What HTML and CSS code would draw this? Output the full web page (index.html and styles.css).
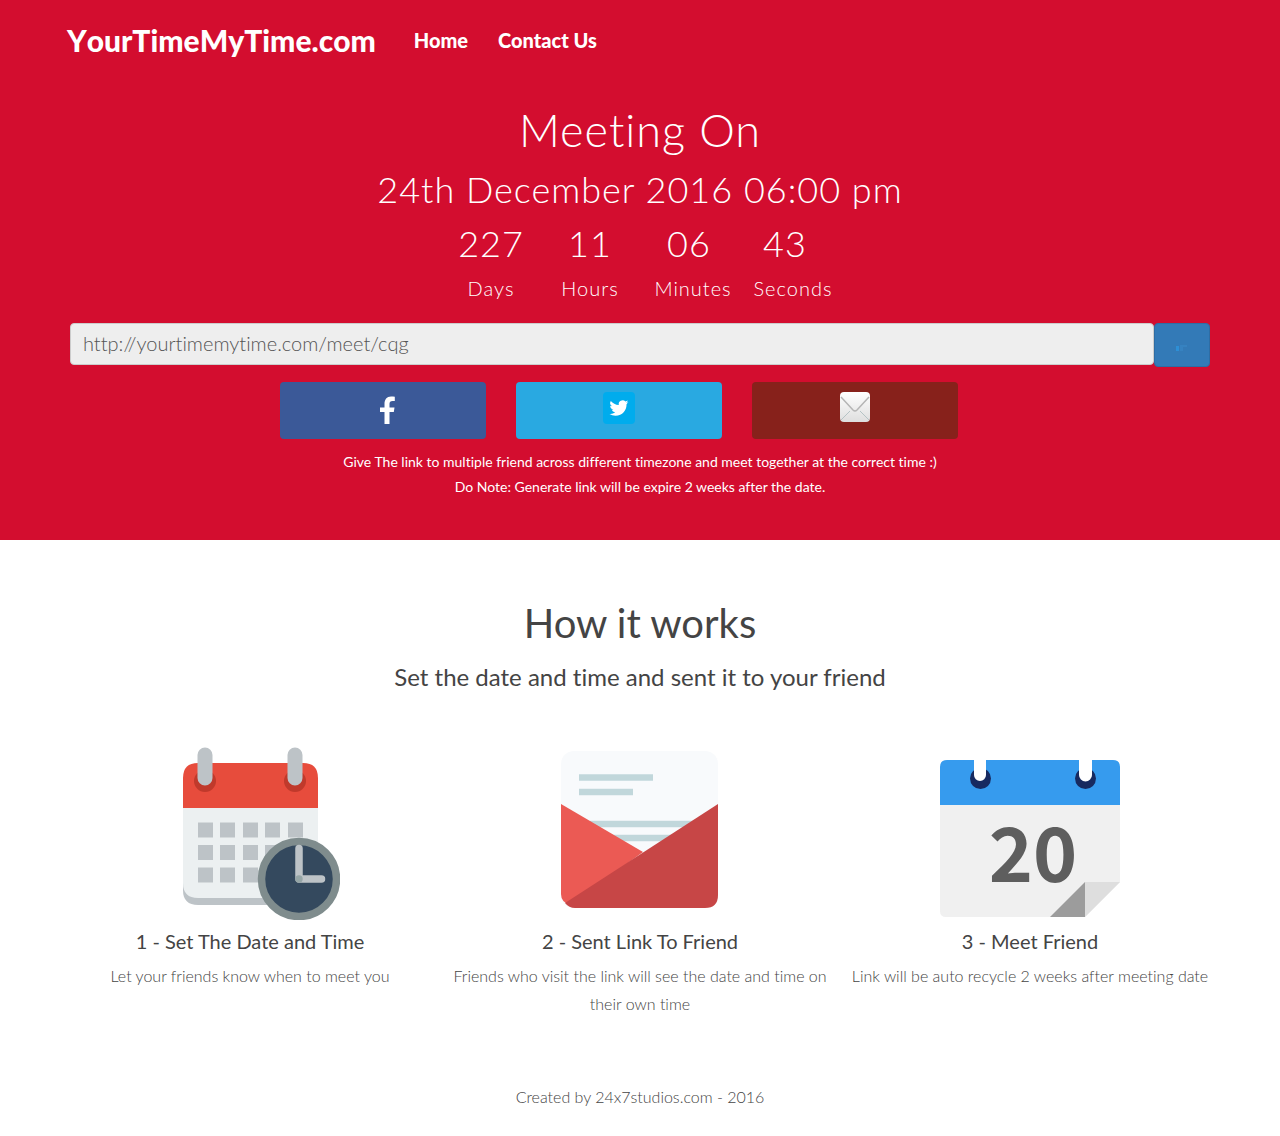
FILE: index.html
```html
<!DOCTYPE html>
<html lang="en">
<head>
<meta charset="utf-8">
<meta name="viewport" content="width=device-width, initial-scale=1">
<title>YourTimeMyTime.com</title>
<link rel="stylesheet" href="styles.css">
</head>
<body>
<header class="hero">
  <nav class="container navbar">
    <a class="brand" href="#">YourTimeMyTime.com</a>
    <a class="nav-link" href="#">Home</a>
    <a class="nav-link" href="#">Contact Us</a>
  </nav>
  <div class="container">
    <h1 class="title">Meeting On</h1>
    <h2 class="date">24th December 2016 06:00 pm</h2>
    <table class="countdown">
      <colgroup><col class="col-days"><col class="col-hours"><col class="col-minutes"><col class="col-seconds"></colgroup>
      <tbody>
        <tr class="values"><td>227</td><td>11</td><td class="inset">06</td><td class="inset-wide">43</td></tr>
        <tr class="units"><td>Days</td><td>Hours</td><td>Minutes</td><td>Seconds</td></tr>
      </tbody>
    </table>
    <div class="link-group">
      <input class="link-input" type="text" aria-label="Meeting link" value="http://yourtimemytime.com/meet/cqg" readonly>
      <button class="copy" type="button" aria-label="Copy link">
        <svg width="12" height="8" viewBox="0 0 12 8" aria-hidden="true"><path d="M0 2h3v5H0z" fill="#2d8fd6"/><path d="M4 2h7M4 4h3M4 6h3" stroke="#3a8aca" fill="none"/></svg>
      </button>
    </div>
    <div class="share">
      <button class="share-button facebook" type="button" aria-label="Share on Facebook">
        <svg width="32" height="32" viewBox="0 0 32 32" aria-hidden="true"><path d="M17.500 32V20H13v-4.500h4.500V12c0-4.500 2.300-7.500 6.500-7.500 1.500 0 2.500.1 3.800.3V9h-2.200c-2.300 0-3.100 1-3.100 3v3.500h5l-.7 4.500h-4.300v12z" fill="#fff"/></svg>
      </button>
      <button class="share-button twitter" type="button" aria-label="Share on Twitter">
        <svg width="32" height="32" viewBox="0 0 32 32" aria-hidden="true"><rect width="32" height="32" rx="4" fill="#00aced"/><path transform="translate(6.500 6.500) scale(.79)" d="M23.950 4.570a10 10 0 0 1-2.820.77 4.960 4.960 0 0 0 2.160-2.720c-.95.55-2 .95-3.130 1.180a4.920 4.920 0 0 0-8.380 4.480C7.690 8.100 4.070 6.130 1.640 3.160a4.900 4.900 0 0 0 1.520 6.570 4.900 4.900 0 0 1-2.230-.62v.06a4.920 4.920 0 0 0 3.950 4.830 5 5 0 0 1-2.210.08 4.940 4.940 0 0 0 4.600 3.420A9.870 9.870 0 0 1 0 19.540a13.990 13.990 0 0 0 7.560 2.210c9.050 0 14-7.500 14-13.980 0-.21 0-.42-.02-.63a9.940 9.940 0 0 0 2.410-2.570z" fill="#fff"/></svg>
      </button>
      <button class="share-button email" type="button" aria-label="Share by email">
        <svg width="32" height="32" viewBox="0 0 32 32" aria-hidden="true"><defs><linearGradient id="paper" x2="0" y2="1"><stop stop-color="#fff"/><stop offset="1" stop-color="#dedede"/></linearGradient></defs><rect x="1" width="30" height="30" rx="4" fill="url(#paper)"/><path d="M2 28l9-9M30 28l-9-9" stroke="#b5c3c5" fill="none"/><path d="M2 5l12 13q2 2 4 0L30 5" stroke="#b5b5b5" fill="none" stroke-width="1.500"/></svg>
      </button>
    </div>
    <p class="note">Give The link to multiple friend across different timezone and meet together at the correct time :)<br>Do Note: Generate link will be expire 2 weeks after the date.</p>
  </div>
</header>
<main class="container how">
  <h2 class="how-title">How it works</h2>
  <h3 class="how-subtitle">Set the date and time and sent it to your friend</h3>
  <div class="steps">
    <section class="step">
      <svg class="art" width="180" height="180" viewBox="0 0 180 180" aria-hidden="true">
        <path d="M23 68h135v82q0 15-15 15H38q-15 0-15-15z" fill="#bdc3c7"/>
        <path d="M23 60h135v83q0 15-15 15H38q-15 0-15-15z" fill="#ecf0f1"/>
        <path d="M23 68V38q0-15 15-15h105q15 0 15 15v30z" fill="#e74c3c"/>
        <circle cx="45" cy="41" r="11" fill="#c0392b"/><circle cx="135" cy="41" r="11" fill="#c0392b"/>
        <path d="M45 15v23M135 15v23" stroke="#bdc3c7" stroke-width="15" stroke-linecap="round"/>
        <path d="M38 90H53M60 90H75M83 90H98M105 90H120M128 90H143M38 112.500H53M60 112.500H75M83 112.500H98M105 112.500H120M38 135H53M60 135H75M83 135H98" stroke="#bdc3c7" stroke-width="15"/>
        <circle cx="139" cy="139" r="37.500" fill="#34495e" stroke="#7f8c8d" stroke-width="7.500"/>
        <path d="M139 108.500V139H161.500" fill="none" stroke="#bdc3c7" stroke-width="7.500" stroke-linecap="round" stroke-linejoin="round"/>
        <circle cx="139" cy="139" r="3.700" fill="#95a5a6"/>
      </svg>
      <h4 class="step-title">1 - Set The Date and Time</h4>
      <p class="step-text">Let your friends know when to meet you</p>
    </section>
    <section class="step">
      <svg class="art" width="180" height="180" viewBox="0 0 180 180" aria-hidden="true">
        <rect x="11" y="11" width="157" height="157" rx="13" fill="#f8fafc"/>
        <path d="M29 37.500H103M29 52H83M40 84H150M55 98H145" stroke="#c1d7db" stroke-width="6.500"/>
        <path d="M11 64L93 112 20 165Q11 162 11 154z" fill="#eb5a54"/>
        <path d="M168 64V155q0 13-13 13H25q-6 0-10-5z" fill="#c74646"/>
      </svg>
      <h4 class="step-title">2 - Sent Link To Friend</h4>
      <p class="step-text">Friends who visit the link will see the date and time on their own time</p>
    </section>
    <section class="step">
      <svg class="art" width="180" height="180" viewBox="0 0 180 180" aria-hidden="true">
        <path d="M0 60h180v82l-35 35H6q-6 0-6-6z" fill="#f0f0f0"/>
        <path d="M0 65V27q0-7 7-7h166q7 0 7 7v38z" fill="#369bee"/>
        <circle cx="40.500" cy="38.500" r="10.500" fill="#172a60"/><circle cx="145.500" cy="38.500" r="10.500" fill="#172a60"/>
        <path d="M34 18h12v17a6 6 0 0 1-12 0zM139 18h13v17a6.500 6.500 0 0 1-13 0z" fill="#fff"/>
        <path d="M145 142h35l-35 35z" fill="#dedede"/><path d="M145 142v35h-35z" fill="#9c9c9c"/>
        <text class="day" x="93" y="142" text-anchor="middle">20</text>
      </svg>
      <h4 class="step-title">3 - Meet Friend</h4>
      <p class="step-text">Link will be auto recycle 2 weeks after meeting date</p>
    </section>
  </div>
</main>
<footer class="footer">Created by 24x7studios.com - 2016</footer>
</body>
</html>
```
FILE: styles.css
```css
* { box-sizing: border-box; }

body {
  margin: 0;
  background: #fff;
  color: #444;
  font-family: Lato, "Liberation Sans", sans-serif;
  font-size: 16px;
  font-weight: 300;
  font-variant-ligatures: none;
  line-height: 28px;
}

h1, h2, h3, h4, p { margin: 0; }

.container {
  max-width: 1170px;
  margin: 0 auto;
  padding: 0 15px;
}

.hero {
  padding: 15px 0 41px;
  background: #d30d2f;
  color: #fff;
  text-align: center;
}

.navbar {
  display: flex;
  align-items: center;
  gap: 30px;
  padding: 0 12px;
  height: 50px;
}

.brand, .nav-link {
  color: #fff;
  font-weight: 900;
  text-decoration: none;
}

.brand { margin-right: 8px; font-size: 30px; font-kerning: none; }
.nav-link { font-size: 20px; }

.title {
  margin-top: 35px;
  font-size: 45px;
  font-weight: 300;
  line-height: 60px;
  letter-spacing: 1px;
}

.date {
  margin-top: 4px;
  font-size: 36px;
  font-weight: 300;
  line-height: 50px;
  letter-spacing: 1px;
}

.countdown {
  width: 398px;
  margin: 4px auto 0;
  border-collapse: collapse;
  table-layout: fixed;
  letter-spacing: 1px;
}

.countdown td { padding: 0; }
.countdown .inset { padding-right: 8px; }
.countdown .inset-wide { padding-right: 16px; }
.col-days { width: 100px; }
.col-hours { width: 98px; }
.col-minutes { width: 108px; }
.col-seconds { width: 92px; }
.values { font-size: 36px; line-height: 50px; }
.units { font-size: 20px; line-height: 40px; }

.link-group {
  display: flex;
  align-items: flex-start;
  margin-top: 15px;
}

.link-input {
  flex: 1;
  min-width: 0;
  height: 42px;
  padding: 0 12px 2px;
  border: 1px solid #ccc;
  border-radius: 4px;
  background: #eee;
  color: #555;
  font: inherit;
  font-size: 20px;
}

.copy {
  display: flex;
  align-items: center;
  justify-content: center;
  width: 56px;
  height: 44px;
  padding: 6px 0 0;
  border: 1px solid #2e6da4;
  border-radius: 4px;
  background: #337ab7;
}

.share {
  display: grid;
  grid-template-columns: repeat(3, 206px);
  justify-content: center;
  gap: 30px;
  margin-top: 15px;
  padding-right: 42px;
}

.share-button {
  height: 57px;
  padding: 0 0 2px;
  border: 0;
  border-radius: 4px;
}

.facebook { background: #3b5998; }
.twitter { background: #29a9e1; }
.email { background: #87211b; }

.note {
  margin-top: 10px;
  font-size: 14px;
  font-weight: 400;
  line-height: 25px;
}

.how {
  padding-top: 55px;
  text-align: center;
}

.how-title {
  font-size: 40px;
  font-weight: 400;
  line-height: 56px;
}

.how-subtitle {
  margin-top: 10px;
  font-size: 24px;
  font-weight: 400;
  line-height: 32px;
}

.steps {
  display: grid;
  grid-template-columns: repeat(3, 1fr);
  gap: 10px;
  margin: 47px -15px 0;
  padding: 0 5px;
}

.art { display: block; margin: 0 auto; }

.day {
  fill: #5e5e5e;
  font-family: "Noto Sans CJK JP", sans-serif;
  font-size: 75px;
  font-weight: 700;
}

.step-title {
  margin: 7px 0;
  font-size: 20px;
  font-weight: 400;
  line-height: 28px;
}

.footer {
  padding: 65px 15px 25px;
  text-align: center;
}
```
